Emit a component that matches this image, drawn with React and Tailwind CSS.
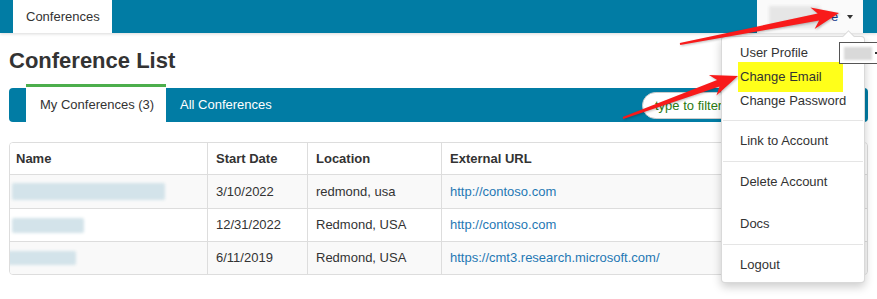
import React from 'react';

const rows = [
    { blur: 'ml-[2px] w-[153px] h-[17px]', date: '3/10/2022', loc: 'redmond, usa', url: 'http://contoso.com', bg: 'bg-[#f9f9f9]', h: 'h-[34px]' },
    { blur: 'ml-[2px] w-[72px] h-[15px]', date: '12/31/2022', loc: 'Redmond, USA', url: 'http://contoso.com', bg: 'bg-white', h: 'h-[33px]' },
    { blur: '-ml-[3px] w-[69px] h-[14px]', date: '6/11/2019', loc: 'Redmond, USA', url: 'https://cmt3.research.microsoft.com/', bg: 'bg-[#f9f9f9]', h: 'h-[33px]' },
];

const MenuItem = ({ children }) => (
    <div className="h-[24px] flex items-center pl-[18px] text-[13px] text-[#333] whitespace-nowrap">{children}</div>
);

const Divider = ({ className }) => <div className={`h-px bg-[#e5e5e5] mx-px ${className}`} />;

const App = () => {
    return (
        <div className="relative w-full h-[299px] overflow-hidden bg-white text-[#333] font-['Liberation_Sans',Arial,sans-serif] text-[13px]">
            {/* top nav */}
            <div className="h-[33px] bg-[#017ca4] flex shadow-[0_1px_3px_rgba(0,0,0,0.15)]">
                <div className="ml-[13px] w-[99px] bg-white flex items-center pl-[13px] text-[13px] text-[#333]">Conferences</div>
                <div className="ml-auto mr-[14px] w-[106px] bg-[#fafafa] flex items-center">
                    <div className="ml-[12px] w-[51px] h-[22px] bg-[#e6e6e6] blur-[1.5px]" />
                    <span className="ml-[11px] text-[#1d3f8f]">e</span>
                    <span className="ml-[9px] w-0 h-0 border-l-[3.5px] border-r-[3.5px] border-t-[4px] border-l-transparent border-r-transparent border-t-[#333]" />
                </div>
            </div>

            <div className="px-[9px]">
                <h1 className="mt-[15px] h-[26px] leading-[26px] text-[22px] font-bold text-[#333]">Conference List</h1>

                {/* tabs */}
                <div className="mt-[14px] h-[34px] bg-[#017ca4] rounded-[4px] flex items-start">
                    <div className="ml-[17px] -mt-[4px] h-[38px] w-[140px] bg-white border-t-[3px] border-[#4cae4c] flex items-center pl-[14px] text-[#333]">My Conferences (3)</div>
                    <div className="h-[34px] flex items-center pl-[14px] text-white">All Conferences</div>
                    <input
                        placeholder="type to filter"
                        className="ml-auto mr-[16px] mt-[4px] w-[210px] h-[27px] rounded-full bg-white border border-[#ccc] pl-[12px] text-[13px] outline-none placeholder:text-[#2b7a12]"
                    />
                </div>

                {/* table */}
                <div className="mt-[20px] w-[859px] border border-[#ddd] rounded-[4px] overflow-hidden">
                    <div className="h-[31px] grid grid-cols-[198px_100px_134px_1fr] font-bold bg-white">
                        <div className="border-r border-[#ddd] flex items-center pl-[6px]">Name</div>
                        <div className="border-r border-[#ddd] flex items-center pl-[8px]">Start Date</div>
                        <div className="border-r border-[#ddd] flex items-center pl-[8px]">Location</div>
                        <div className="flex items-center pl-[8px]">External URL</div>
                    </div>
                    {rows.map((r, i) => (
                        <div key={i} className={`${r.h} grid grid-cols-[198px_100px_134px_1fr] border-t border-[#ddd] ${r.bg}`}>
                            <div className="border-r border-[#ddd] flex items-center">
                                <div className={`${r.blur} bg-[#d3e3ea] blur-[1.5px] rounded-[2px]`} />
                            </div>
                            <div className="border-r border-[#ddd] flex items-center pl-[8px]">{r.date}</div>
                            <div className="border-r border-[#ddd] flex items-center pl-[8px]">{r.loc}</div>
                            <div className="flex items-center pl-[8px] text-[#1f78b4]">{r.url}</div>
                        </div>
                    ))}
                </div>
            </div>

            {/* user dropdown */}
            <div className="absolute left-[721px] top-[36px] w-[144px] bg-white border border-[rgba(0,0,0,0.15)] rounded-[4px] shadow-[0_4px_10px_rgba(0,0,0,0.2)] pt-[4px] pb-[5px]">
                <div className="absolute -top-[5px] left-[122px] w-[9px] h-[9px] rotate-45 bg-white border-l border-t border-[rgba(0,0,0,0.15)]" />
                <MenuItem>User Profile</MenuItem>
                <div className="h-[24px] flex items-center pl-[16px] text-[13px] text-[#333]">
                    <span className="h-[30px] w-[105px] flex items-center pl-[2px] bg-[#ffff1a]">Change Email</span>
                </div>
                <MenuItem>Change Password</MenuItem>
                <Divider className="mt-[7px] mb-[8px]" />
                <MenuItem>Link to Account</MenuItem>
                <Divider className="my-[8px]" />
                <MenuItem>Delete Account</MenuItem>
                <div className="h-[18px]" />
                <MenuItem>Docs</MenuItem>
                <Divider className="my-[8px]" />
                <MenuItem>Logout</MenuItem>
            </div>

            {/* small box on the right edge */}
            <div className="absolute left-[839px] top-[42px] w-[40px] h-[22px] bg-white border border-[#555] flex items-center">
                <div className="ml-[4px] w-[28px] h-[13px] bg-[#d9d9d9] blur-[1px]" />
                <div className="ml-[3px] w-[2px] h-[2px] bg-[#333]" />
            </div>

            {/* annotation arrows */}
            <svg className="absolute left-0 top-0 pointer-events-none" width="877" height="299" viewBox="0 0 877 299">
                <g fill="#f81a1a" style={{ filter: 'drop-shadow(1px 1px 1px rgba(0,0,0,0.25))' }}>
                    <polygon points="680.2,45 819.1,20.5 814.6,29 839,13 810.4,7.4 817.7,13.6 679.8,43" />
                    <polygon points="623.3,118.9 719.5,86.5 716.4,95.6 738,76 708.9,74.9 717.1,79.9 622.7,117.1" />
                </g>
            </svg>
        </div>
    );
};

export default App;
